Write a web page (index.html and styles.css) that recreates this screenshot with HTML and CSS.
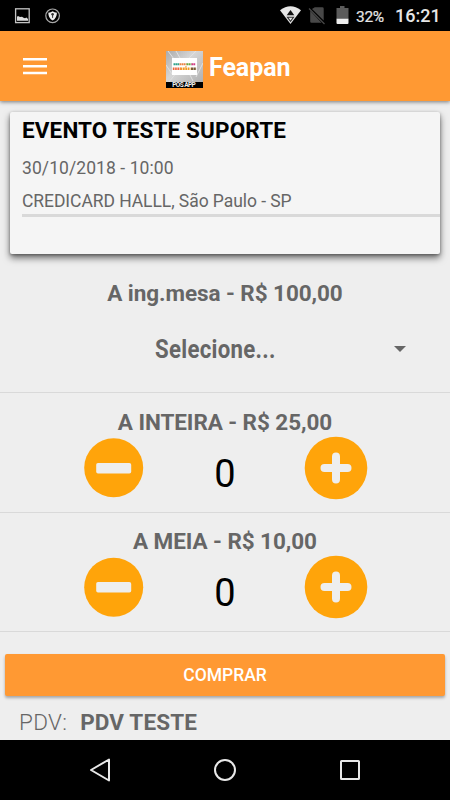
FILE: index.html
```html
<!DOCTYPE html>
<html lang="pt-BR">
<head>
<meta charset="utf-8">
<title>Feapan</title>
<link rel="stylesheet" href="styles.css">
</head>
<body>
<div class="screen">
  <div class="status">
    <svg class="notices" width="70" height="31" viewBox="0 0 70 31">
      <rect x="15.6" y="8.8" width="13.6" height="13.8" fill="none" stroke="#c4c4c4" stroke-width="1.3"/>
      <path d="M17 20.700v-4l1-.8 2 1 2-.2 1.500 1 1.500.5 1.500-.6 1.500 1.500v1.600z" fill="#ddd"/>
      <circle cx="52.6" cy="15.8" r="6.8" fill="none" stroke="#aaa" stroke-width="1.2"/>
      <path d="M48.3 12.7q2.6 0 4.3-1.4 1.7 1.4 4.3 1.4 0 5.5-4.3 7.8-4.3-2.3-4.3-7.8z" fill="#eee"/>
      <circle cx="52.6" cy="14.3" r="1.3" fill="#333"/><path d="M52.6 14.5v3.4" stroke="#333"/>
    </svg>
    <svg class="signals" width="70" height="31" viewBox="280 0 70 31">
      <path d="M280 10.3Q290.500 2.300 301 10.300L290.500 24z" fill="#e6e6e6"/>
      <path d="M286.700 15.200L290.500 10l3.800 5.200z" fill="#111"/>
      <path d="M287.500 17.200h6L290.500 21.300z" fill="none" stroke="#333" stroke-width="1.100"/>
      <path d="M312 9l2.800-1.800h7.500q1.400 0 1.400 1.400v12zM310.200 10.800l11.300 12h-10q-1.300 0-1.300-1.300z" fill="#484848"/>
      <path d="M309 8.500l15.500 15.500" stroke="#484848" stroke-width="1.300"/>
      <path d="M336.500 8h3.500v-2h4.500v2h4v11h-12z" fill="#5b5b5b"/>
      <path d="M336.500 18.700h12v4.300q0 1-1 1h-10q-1 0-1-1z" fill="#eee"/>
    </svg>
    <span class="battery">32%</span><span class="clock">16:21</span>
  </div>
  <header class="appbar">
    <svg class="menu" width="24" height="20" viewBox="0 0 24 20"><path d="M0 3.300h24M0 10.200h24M0 17h24" stroke="#fff" stroke-width="2.500"/></svg>
    <div class="brand">
      <svg class="logo" width="37" height="37" viewBox="0 0 37 37">
        <defs><linearGradient id="silver" x2="1" y2="1"><stop stop-color="#aaa"/><stop offset=".4" stop-color="#d6d6d6"/><stop offset="1" stop-color="#aaa"/></linearGradient></defs>
        <path d="M0 0h37v37H0z" fill="url(#silver)"/>
        <path d="M2 0l6 8M10 0l4 7M0 14l6 9M3 31l8-10M27 30l-4-8M30 0l-7 7M37 12l-7 14" stroke="#e0e0e0" fill="none"/>
        <path d="M6 7h25v17H6z" fill="#fff"/>
        <g fill="none" stroke-width="2"><path d="M7.500 13.200h6" stroke="#31a28c" stroke-dasharray="1.700 .3"/><path d="M13.500 13.200h7" stroke="#e98343" stroke-dasharray="1.700 .4"/><path d="M20.500 13.200h5" stroke="#65a842" stroke-dasharray="1.600 .4"/><path d="M25.500 13.200h4" stroke="#d23b83" stroke-dasharray="1.600 .3"/></g>
        <g fill="none" stroke-width="2.400"><path d="M6.800 17.800h8" stroke="#f0653b" stroke-dasharray="1.700 .6"/><path d="M14.500 17.800h10" stroke="#f39a21" stroke-dasharray="1.800 .6"/><path d="M25 17.800h5.300" stroke="#795b35" stroke-dasharray="2.200 .4"/></g>
        <path d="M19.300 16.500l1-1.500" stroke="#ee8c21"/>
        <path d="M0 31h37v6H0z" fill="#000"/>
        <text class="logo-text" x="18" y="36.300" text-anchor="middle" textLength="23.500">POS APP</text>
      </svg>
      <h1>Feapan</h1>
    </div>
  </header>
  <main>
    <section class="event">
      <h2>EVENTO TESTE SUPORTE</h2>
      <p class="date">30/10/2018 - 10:00</p>
      <p class="venue">CREDICARD HALLL, São Paulo - SP</p>
    </section>
    <section class="ticket table">
      <h3>A ing.mesa - R$ 100,00</h3>
      <div class="select"><span class="value">Selecione...</span><svg width="12" height="6" viewBox="0 0 12 6"><path d="M0 0h12L6 6z" fill="#666"/></svg></div>
    </section>
    <section class="ticket middle">
      <h3>A INTEIRA - R$ 25,00</h3>
      <div class="stepper">
        <svg width="60" height="64" viewBox="0 0 60 64"><circle cx="29.700" cy="31.800" r="29.500" fill="#ffa40a"/><rect x="12.200" y="27" width="35" height="10.500" rx="1.800" fill="#eee"/></svg>
        <span class="count">0</span>
        <svg width="64" height="64" viewBox="0 0 64 64"><circle cx="32" cy="32" r="31.300" fill="#ffa40a"/><path d="M20.500 32h23M32 20.500v23" stroke="#eee" stroke-width="8" stroke-linecap="round"/></svg>
      </div>
    </section>
    <section class="ticket last">
      <h3>A MEIA - R$ 10,00</h3>
      <div class="stepper">
        <svg width="60" height="64" viewBox="0 0 60 64"><circle cx="29.700" cy="32.200" r="29.500" fill="#ffa40a"/><rect x="12.200" y="27" width="35" height="10.500" rx="1.800" fill="#eee"/></svg>
        <span class="count">0</span>
        <svg width="64" height="64" viewBox="0 0 64 64"><circle cx="32" cy="32" r="31.300" fill="#ffa40a"/><path d="M20.500 32h23M32 20.500v23" stroke="#eee" stroke-width="8" stroke-linecap="round"/></svg>
      </div>
    </section>
    <button class="buy">COMPRAR</button>
    <p class="pdv"><span>PDV:</span><strong>PDV TESTE</strong></p>
  </main>
  <nav class="navbar">
    <svg width="450" height="60" viewBox="0 0 450 60" fill="none" stroke="#e8e8e8" stroke-width="2">
      <path d="M109 19.500v21L91 30z" stroke-linejoin="round"/><circle cx="225" cy="30" r="10"/><rect x="341" y="21" width="18" height="18" rx=".5"/>
    </svg>
  </nav>
</div>
</body>
</html>
```
FILE: styles.css
```css
* { box-sizing: border-box; margin: 0; padding: 0; }
body { font-family: Roboto, "Liberation Sans", sans-serif; background: #eee; color: #666; }
svg { display: block; flex: none; }
.screen { width: 450px; height: 800px; display: flex; flex-direction: column; overflow: hidden; }
.status { height: 31px; flex: none; display: flex; background: #000; color: #e6e6e6; line-height: 34px; white-space: nowrap; }
.signals { margin-left: 210px; }
.battery { width: 45px; padding-left: 6px; font-size: 15.5px; letter-spacing: -.3px; -webkit-text-stroke: .2px; }
.clock { font-size: 18px; font-weight: 500; line-height: 32px; }
.appbar { height: 70px; flex: none; display: flex; align-items: center; padding-left: 23px; background: #ff9933; color: #fff; box-shadow: 0 1px 4px rgba(0,0,0,.5); }
.brand { display: flex; align-items: center; margin-left: 119px; padding-top: 6px; gap: 6px; }
.logo-text { font: 700 6.5px Roboto, sans-serif; fill: #eee; }
h1 { font-size: 25px; line-height: 30px; margin-top: -2px; letter-spacing: -.05px; }
main { flex: 1; display: flex; flex-direction: column; }
.event { height: 142px; margin: 11px 10px 0; padding-left: 12px; background: #f5f5f5; border-radius: 2px; box-shadow: 0 4px 7px rgba(0,0,0,.55), 0 1px 3px rgba(0,0,0,.3); }
h2 { font-size: 22.5px; line-height: 36px; margin-bottom: 2px; color: #000; letter-spacing: .13px; }
.date { font-size: 17.5px; line-height: 36px; letter-spacing: .08px; }
.venue { font-size: 17.5px; line-height: 30px; height: 31px; border-bottom: 3px solid #d9d9d9; letter-spacing: -.06px; }
.ticket { padding-top: 15px; border-bottom: 1px solid #d9d9d9; text-align: center; }
.ticket h3 { font-size: 22.5px; line-height: 28px; letter-spacing: -.07px; }
.ticket.table { height: 139px; padding-top: 25px; }
.ticket.middle { height: 120px; }
.ticket.last { height: 119px; padding-top: 14px; }
.select { display: flex; align-items: center; justify-content: space-between; padding: 27px 44px 0 155px; }
.value { font-size: 25.5px; font-weight: 700; line-height: 30px; transform: scaleX(.87); transform-origin: left; letter-spacing: .35px; }
.stepper { display: flex; align-items: center; justify-content: space-between; padding: 0 82px 0 84px; height: 64px; }
.count { font-size: 38px; line-height: 64px; color: #000; padding: 12px 0 0 2px; }
.buy { flex: none; height: 42px; margin: 22px 5px 0; border: 0; border-radius: 2px; background: #ff9933; color: #fff; font: 500 17.5px/41px Roboto, sans-serif; box-shadow: 0 2px 3px rgba(0,0,0,.3); }
.pdv { display: flex; gap: 13px; padding: 12px 19px 0; font-size: 22.5px; line-height: 28px; }
.pdv span { font-weight: 300; letter-spacing: .3px; }
.pdv strong { letter-spacing: .15px; }
.navbar { height: 60px; flex: none; background: #000; }
```
